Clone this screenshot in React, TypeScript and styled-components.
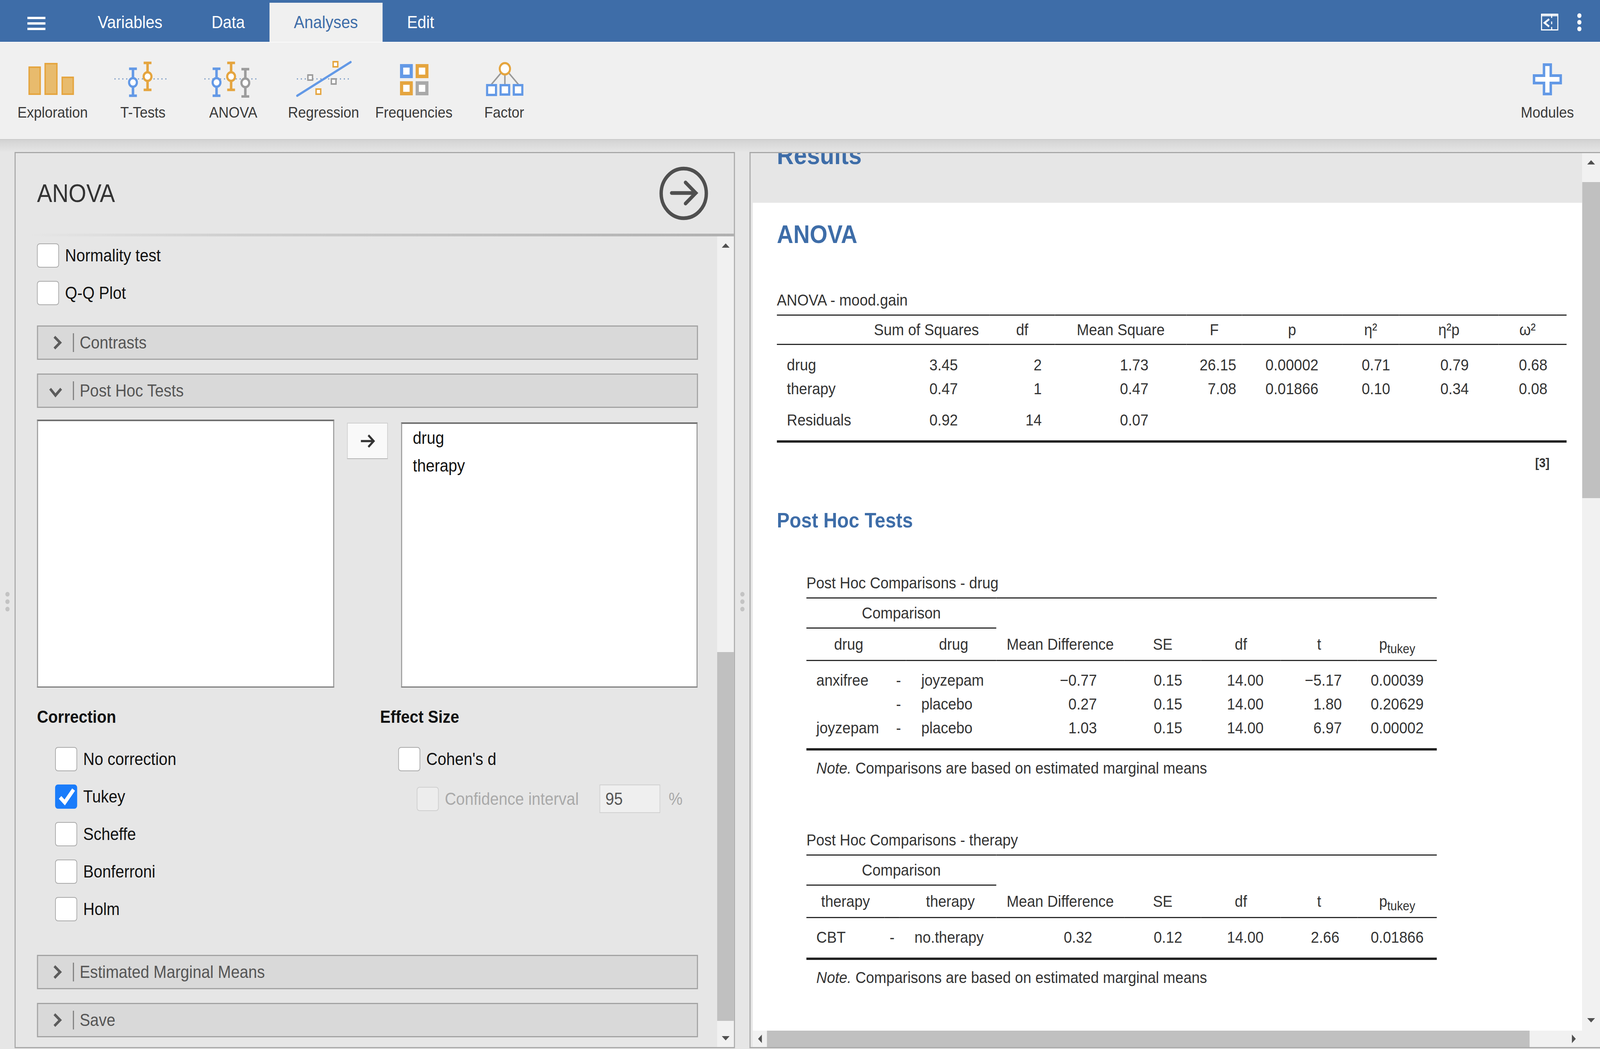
import React from 'react';
import styled, { createGlobalStyle } from 'styled-components';

const Global = createGlobalStyle`
  * { box-sizing: border-box; }
  html, body { margin: 0; padding: 0; width: 100%; height: 100%; overflow: hidden; }
  body { font-family: "Liberation Sans", Arial, sans-serif; color: #333; background: #e6e6e6; }
`;

const Viewport = styled.div`
  width: 100vw; height: 100vh; overflow: hidden;
`;
const Page = styled.div`
  width: 4500px; height: 2685px; display: flex; flex-direction: column; overflow: hidden;
  transform-origin: 0 0;
`;

/* ---------- top bar ---------- */
const TopBar = styled.header`
  height: 107px; flex: none; background: #3e6da8; display: flex; align-items: flex-end;
`;
const MenuZone = styled.div`
  width: 206px; height: 107px; display: flex; align-items: center; padding: 12px 0 0 77px;
`;
const Tabs = styled.nav`
  display: flex; height: 100px; flex: 1;
`;
const Tab = styled.div<{ $active?: boolean }>`
  padding: 0 69px; font-size: 44.4px; line-height: 100px;
  color: ${p => (p.$active ? '#3e6da8' : '#fff')};
  background: ${p => (p.$active ? '#f0f0f0' : 'transparent')};
`;
const TopRight = styled.div`
  display: flex; align-items: center; height: 107px; padding: 6px 52px 0 0; gap: 53px;
`;

/* ---------- ribbon ---------- */
const Ribbon = styled.div`
  height: 251px; flex: none; background: #f0f0f0; display: flex; justify-content: space-between;
  padding: 41px 21px 0; border-top: 2px solid #f9f9f9; border-bottom: 2px solid #c9c9c9;
`;
const RibbonGroup = styled.div`
  display: flex;
`;
const RibbonButton = styled.div`
  width: 254px; display: flex; flex-direction: column; align-items: center; gap: 14px;
`;
const RibbonLabel = styled.div`
  font-size: 39.5px; line-height: 46px; color: #3a3a3a; white-space: nowrap;
`;

/* ---------- main ---------- */
const Main = styled.main`
  flex: 1; display: flex; padding-top: 31px; min-height: 0;
  background: linear-gradient(#d3d3d3, #e6e6e6 32px);
`;
const Gutter = styled.div`
  width: 41px; flex: none; display: flex; flex-direction: column; align-items: center;
  justify-content: center; gap: 7px; padding-top: 6px;
`;
const GutterDot = styled.span`
  width: 12px; height: 12px; border-radius: 50%; background: #c3c3c3;
`;

/* ---------- options panel ---------- */
const OptionsPanel = styled.section`
  width: 2026px; flex: none; margin-bottom: 2px; display: flex; flex-direction: column;
  border: 3px solid #a8a8a8; background: #e6e6e6;
`;
const OptionsHeader = styled.div`
  height: 206px; flex: none; display: flex; align-items: center; justify-content: space-between;
  padding: 0 72px 0 60px;
`;
const OptionsTitle = styled.h1`
  margin: 0; font-size: 64px; font-weight: 400; color: #333;
`;
const HeaderRule = styled.div`
  height: 7px; flex: none;
  background: linear-gradient(to right, #e6e6e6 2%, #cfcfcf 30%, #b0b0b0 100%);
`;
const OptionsBody = styled.div`
  flex: 1; display: flex; min-height: 0;
`;
const OptionsContent = styled.div`
  flex: 1; padding: 18px 54px 0 60px; font-size: 44px; color: #111;
`;
const TopChecks = styled.div`
  display: flex; flex-direction: column; gap: 34px; margin-bottom: 52px;
`;
const CheckRow = styled.div`
  display: flex; align-items: center; gap: 17px; height: 62px; white-space: nowrap;
`;
const Box = styled.span<{ $checked?: boolean; $off?: boolean }>`
  width: 62px; height: 62px; flex: none; border-radius: 8px; display: flex;
  background: ${p => (p.$checked ? '#1a7cfa' : p.$off ? '#ededed' : '#fff')};
  border: 2px solid ${p => (p.$checked ? '#1a7cfa' : p.$off ? '#cfcfcf' : '#a9a9a9')};
`;
const Section = styled.div<{ $open?: boolean }>`
  height: 88px; display: flex; align-items: center; background: #d9d9d9;
  border: 3px solid #a3a3a3; margin-bottom: ${p => (p.$open ? 30 : 35)}px;
  color: #555; font-size: 44px;
`;
const SectionDivider = styled.span`
  width: 3px; height: 48px; background: #7b7b7b; margin-right: 16px;
`;
const Lists = styled.div`
  display: flex; align-items: flex-end; width: 1858px; height: 686px;
`;
const VarList = styled.div<{ $h: number; $w: number }>`
  width: ${p => p.$w}px; height: ${p => p.$h}px; flex: none; background: #fff;
  border: 3px solid #9a9a9a; border-top: 4px solid #707070; border-bottom-color: #7c7c7c;
  padding-left: 30px;
`;
const VarItem = styled.div`
  line-height: 71px; font-size: 44px; color: #111;
`;
const MoveButton = styled.div`
  width: 115px; height: 93px; flex: none; align-self: flex-start; margin: 8px 37px 0 36px;
  background: #f9f9f9; border: 2px solid #cfcfcf; border-bottom-color: #b5b5b5;
  display: flex; align-items: center; justify-content: center;
`;
const Groups = styled.div`
  display: flex; margin-top: 50px; margin-bottom: 86px;
`;
const GroupCol = styled.div<{ $w: number }>`
  width: ${p => p.$w}px; flex: none;
`;
const GroupHead = styled.div`
  font-size: 44px; font-weight: 700; line-height: 50px; color: #111; margin-bottom: 52px;
`;
const GroupList = styled.div`
  display: flex; flex-direction: column; gap: 34px; padding-left: 51px;
`;
const ConfidenceRow = styled.div`
  display: flex; align-items: center; height: 73px; padding-left: 52px; white-space: nowrap; color: #a9a9a9;
`;
const ConfidenceLabel = styled.span`
  margin: 0 58px 0 17px;
`;
const NumberBox = styled.span`
  width: 171px; height: 73px; flex: none; padding-left: 15px; line-height: 69px;
  background: #efefef; border: 2px solid #d0d0d0; color: #555;
`;
const Percent = styled.span`
  margin-left: 24px;
`;

/* ---------- scrollbars ---------- */
const VBar = styled.div<{ $bottom?: number }>`
  width: ${p => (p.$bottom ? 50 : 47)}px; flex: none; background: #f1f1f1; display: flex; flex-direction: column;
  align-items: center; padding-bottom: ${p => p.$bottom ?? 0}px;
`;
const BarArrow = styled.div<{ $h?: number }>`
  height: ${p => p.$h ?? 46}px; width: 100%; flex: none; display: flex; align-items: center; justify-content: center;
`;
const BarArrowEnd = styled(BarArrow)`
  margin-top: auto;
`;
const VThumb = styled.div<{ $gap: number; $size: number }>`
  width: 100%; flex: none; background: #c0c0c0; margin-top: ${p => p.$gap}px; height: ${p => p.$size}px;
`;
const HBar = styled.div`
  height: 42px; flex: none; background: #f1f1f1; display: flex; align-items: stretch; margin-left: 6px;
`;
const HCap = styled.div<{ $w: number }>`
  width: ${p => p.$w}px; flex: none; display: flex; align-items: center; justify-content: center;
`;
const HThumb = styled.div<{ $w: number }>`
  width: ${p => p.$w}px; flex: none; background: #c0c0c0;
`;
const HRest = styled.div`
  flex: 1; display: flex; align-items: center; justify-content: flex-end; padding-right: 68px;
`;

/* ---------- results panel ---------- */
const ResultsPanel = styled.section`
  flex: 1; min-width: 0; margin-bottom: 2px; display: flex; flex-direction: column;
  border-top: 3px solid #a8a8a8; border-bottom: 3px solid #a8a8a8; border-left: 3px solid #a8a8a8;
  background: #e6e6e6;
`;
const ResultsBody = styled.div`
  flex: 1; display: flex; min-height: 0;
`;
const Doc = styled.div`
  flex: 1; min-width: 0; margin-left: 6px; overflow: hidden; background: #fff; display: flex; flex-direction: column;
`;
const Band = styled.div`
  height: 127px; flex: none; background: #e6e6e6; overflow: hidden; padding-left: 68px;
`;
const ResultsTitle = styled.h1`
  margin: -33px 0 0; font-size: 66px; line-height: 76px; font-weight: 700; color: #3e6da8;
`;
const DocBody = styled.div`
  padding: 44px 0 0 68px; color: #333;
`;
const H2 = styled.h2`
  margin: 0 0 108px; font-size: 64px; line-height: 74px; font-weight: 700; color: #3e6da8;
`;
const H3 = styled.h3`
  margin: 97px 0 107px; font-size: 53.5px; line-height: 60px; font-weight: 700; color: #3e6da8;
`;
const TableTitle = styled.div`
  font-size: 41.2px; line-height: 46px; margin-bottom: 14px; white-space: nowrap;
`;
const Indented = styled.div`
  padding-left: 83px;
`;
const TableBlock = styled.div`
  margin-bottom: 116px;
`;
const Grid = styled.table<{ $w: number }>`
  width: ${p => p.$w}px; table-layout: fixed; border-collapse: separate; border-spacing: 0;
  font-size: 41.2px; color: #333; white-space: nowrap;
`;
const Col = styled.col<{ $w: number }>`
  width: ${p => p.$w}px;
`;
const Head = styled.th<{ $rules?: 'top' | 'bottom' | 'both'; $h: number; $shift?: number }>`
  height: ${p => p.$h}px; padding: 0 0 0 ${p => p.$shift ?? 0}px; font-weight: 400; text-align: center;
  border-top: ${p => (p.$rules === 'top' || p.$rules === 'both' ? '3px solid #2b2b2b' : '0')};
  border-bottom: ${p => (p.$rules === 'bottom' || p.$rules === 'both' ? '3px solid #2b2b2b' : '0')};
`;
const Cell = styled.td<{ $align?: 'left' | 'right' | 'center'; $pl?: number; $pr?: number }>`
  height: 61px; text-align: ${p => p.$align ?? 'right'};
  padding: 0 ${p => p.$pr ?? 0}px 0 ${p => p.$pl ?? 0}px;
`;
const Gap = styled.td<{ $h: number; $end?: boolean }>`
  height: ${p => p.$h}px; padding: 0; border-bottom: ${p => (p.$end ? '6px solid #222' : '0')};
`;
const NoteCell = styled.td`
  height: 90px; padding: 0 0 0 28px; text-align: left;
`;
const Footnote = styled.div`
  margin-top: 32px; width: 2173px; text-align: right; font-size: 33px; line-height: 40px; font-weight: 700;
`;
const Sub = styled.sub`
  font-size: 33px; line-height: 0;
`;

/* ---------- icons ---------- */
const BLUE = '#6399e6';
const ORANGE = '#e5a53f';
const GREY = '#9c9c9c';

const IconSvg = styled.svg`
  display: block; flex: none;
`;

const Dots = ({ x1, x2 }: { x1: number; x2: number }) => (
  <line x1={x1} x2={x2} y1={52} y2={52} stroke="#6f93c2" strokeWidth={3} strokeDasharray="3 8" />
);

const ErrorBar = ({ x, top, mid, bottom, c }: { x: number; top: number; mid: number; bottom: number; c: string }) => (
  <g>
    <line x1={x} x2={x} y1={top} y2={bottom} stroke={c} strokeWidth={7} />
    <line x1={x - 11} x2={x + 11} y1={top} y2={top} stroke={c} strokeWidth={6.5} />
    <line x1={x - 11} x2={x + 11} y1={bottom} y2={bottom} stroke={c} strokeWidth={6.5} />
    <circle cx={x} cy={mid} r={11} fill="#fff" stroke={c} strokeWidth={6} />
  </g>
);

const Square = ({ x, y, s, sw, c }: { x: number; y: number; s: number; sw: number; c: string }) => (
  <rect x={x + sw / 2} y={y + sw / 2} width={s - sw} height={s - sw} fill="#fff" stroke={c} strokeWidth={sw} />
);

const RibbonSvg = ({ children }: { children: React.ReactNode }) => (
  <IconSvg width={254} height={100} viewBox="0 0 254 100">{children}</IconSvg>
);

const ExplorationIcon = () => (
  <RibbonSvg>
    <g fill="#e8bb6d" stroke={ORANGE} strokeWidth={4}>
      <rect x={61} y={22} width={31} height={69} />
      <rect x={106} y={13} width={33} height={78} />
      <rect x={154} y={48} width={31} height={43} />
    </g>
  </RibbonSvg>
);
const TTestIcon = () => (
  <RibbonSvg>
    <Dots x1={47} x2={201} />
    <ErrorBar x={99} top={26} mid={61} bottom={95} c={BLUE} />
    <ErrorBar x={140} top={11} mid={46} bottom={80} c={ORANGE} />
  </RibbonSvg>
);
const AnovaIcon = () => (
  <RibbonSvg>
    <Dots x1={46} x2={200} />
    <ErrorBar x={80} top={26} mid={61} bottom={95} c={BLUE} />
    <ErrorBar x={121} top={11} mid={46} bottom={80} c={ORANGE} />
    <ErrorBar x={161} top={27} mid={62} bottom={97} c={GREY} />
  </RibbonSvg>
);
const RegressionIcon = () => (
  <RibbonSvg>
    <Dots x1={52} x2={206} />
    <line x1={53} y1={95} x2={203} y2={9} stroke={BLUE} strokeWidth={6} strokeLinecap="round" />
    <Square x={152} y={6} s={17} sw={4} c={ORANGE} />
    <Square x={81} y={40} s={17} sw={4} c={GREY} />
    <Square x={147} y={50} s={17} sw={4} c={GREY} />
    <Square x={104} y={76} s={17} sw={4} c={ORANGE} />
  </RibbonSvg>
);
const FrequenciesIcon = () => (
  <RibbonSvg>
    <Square x={88} y={14} s={36} sw={9} c={BLUE} />
    <Square x={132} y={14} s={36} sw={9} c={ORANGE} />
    <Square x={88} y={58} s={36} sw={9} c={ORANGE} />
    <Square x={132} y={58} s={36} sw={9} c="#a9a9a9" />
  </RibbonSvg>
);
const FactorIcon = () => (
  <RibbonSvg>
    <g stroke="#999" strokeWidth={4}>
      <line x1={117} y1={38} x2={91} y2={66} />
      <line x1={129} y1={40} x2={129} y2={66} />
      <line x1={141} y1={38} x2={167} y2={66} />
    </g>
    <circle cx={129} cy={26} r={14.5} fill="#fff" stroke={ORANGE} strokeWidth={5.5} />
    <Square x={76} y={65} s={31} sw={6} c={BLUE} />
    <Square x={114} y={65} s={30} sw={6} c={BLUE} />
    <Square x={151} y={65} s={30} sw={6} c={BLUE} />
  </RibbonSvg>
);
const ModulesIcon = () => (
  <RibbonSvg>
    <path
      d="M117.5 15.5H136.5V43.5H164.5V62.5H136.5V90.5H117.5V62.5H89.5V43.5H117.5Z"
      fill="#fff" stroke={BLUE} strokeWidth={7}
    />
  </RibbonSvg>
);

const MenuIcon = () => (
  <IconSvg width={51} height={36} viewBox="0 0 51 36">
    <g fill="#fff">
      <rect x={0} y={1} width={51} height={6} />
      <rect x={0} y={15} width={51} height={6} />
      <rect x={0} y={29} width={51} height={6} />
    </g>
  </IconSvg>
);
const SplitIcon = () => (
  <IconSvg width={49} height={43} viewBox="0 0 49 43">
    <rect x={1.5} y={1.5} width={46} height={40} fill="none" stroke="#fff" strokeWidth={3} />
    <line x1={1} y1={5} x2={48} y2={5} stroke="#fff" strokeWidth={3} />
    <path d="M30 2V11M30 20V27M30 34V42" stroke="#fff" strokeWidth={3} fill="none" />
    <path d="M23 14L10 23.5L23 33" stroke="#fff" strokeWidth={5} fill="none" />
  </IconSvg>
);
const KebabIcon = () => (
  <IconSvg width={12} height={46} viewBox="0 0 12 46">
    <g fill="#fff">
      <circle cx={6} cy={6} r={6} />
      <circle cx={6} cy={23} r={6} />
      <circle cx={6} cy={40} r={6} />
    </g>
  </IconSvg>
);
const CloseCircle = () => (
  <IconSvg width={138} height={138} viewBox="0 0 138 138">
    <circle cx={69} cy={69} r={63.5} fill="none" stroke="#4f4f4f" strokeWidth={9.5} />
    <path d="M35 68H103M74 41L103 68L74 95" fill="none" stroke="#4f4f4f" strokeWidth={9.5} strokeLinecap="round" strokeLinejoin="miter" />
  </IconSvg>
);
const Chevron = ({ open }: { open?: boolean }) => (
  <IconSvg width={98} height={48} viewBox="0 0 98 48">
    <path d={open ? 'M34 19L49 36L65 19' : 'M46 9L62 24L46 39'} fill="none" stroke="#5c5c5c" strokeWidth={7} />
  </IconSvg>
);
const MoveArrow = () => (
  <IconSvg width={42} height={36} viewBox="0 0 42 36">
    <path d="M2 18H37M23 3L38 18L23 33" fill="none" stroke="#333" strokeWidth={5.5} />
  </IconSvg>
);
const Tick = () => (
  <IconSvg width={58} height={58} viewBox="0 0 58 58">
    <path d="M12 31L25 44L50 11" fill="none" stroke="#fff" strokeWidth={10} />
  </IconSvg>
);
const Tri = ({ d }: { d: 'up' | 'down' | 'left' | 'right' }) => {
  const paths = {
    up: 'M0 11L11 0L22 11Z',
    down: 'M0 0L22 0L11 11Z',
    left: 'M11 0V22L0 11Z',
    right: 'M0 0V22L11 11Z',
  };
  const wide = d === 'up' || d === 'down';
  return (
    <IconSvg width={wide ? 22 : 11} height={wide ? 11 : 22} viewBox={wide ? '0 0 22 11' : '0 0 11 22'}>
      <path d={paths[d]} fill="#505050" />
    </IconSvg>
  );
};

/* ---------- data ---------- */
const ribbonItems = [
  { label: 'Exploration', Icon: ExplorationIcon },
  { label: 'T-Tests', Icon: TTestIcon },
  { label: 'ANOVA', Icon: AnovaIcon },
  { label: 'Regression', Icon: RegressionIcon },
  { label: 'Frequencies', Icon: FrequenciesIcon },
  { label: 'Factor', Icon: FactorIcon },
];

const anovaCols = [243, 355, 184, 370, 156, 282, 160, 280, 162, 29];
const anovaPads = [89, 37, 107, 16, 67, 25, 84, 25];
const anovaHead = ['Sum of Squares', 'df', 'Mean Square', 'F', 'p', 'η²', 'η²p', 'ω²'];
const anovaRows = [
  ['drug', '3.45', '2', '1.73', '26.15', '0.00002', '0.71', '0.79', '0.68'],
  ['therapy', '0.47', '1', '0.47', '7.08', '0.01866', '0.10', '0.34', '0.08'],
];
const anovaResidual = ['Residuals', '0.92', '14', '0.07', '', '', '', '', ''];

const AnovaRow = ({ row }: { row: string[] }) => (
  <tr>
    {row.map((v, i) =>
      i === 0 ? (
        <Cell key={i} $align="left" $pl={28}>{v}</Cell>
      ) : (
        <Cell key={i} $pr={anovaPads[i - 1]}>{v}</Cell>
      ),
    )}
    <Cell />
  </tr>
);

const AnovaTable = () => (
  <Grid $w={2221}>
    <colgroup>{anovaCols.map((w, i) => <Col key={i} $w={w} />)}</colgroup>
    <thead>
      <tr>
        <Head $h={78} $rules="both" />
        {anovaHead.map(h => <Head key={h} $h={78} $rules="both">{h}</Head>)}
        <Head $h={78} $rules="both" />
      </tr>
    </thead>
    <tbody>
      <tr><Gap $h={21} colSpan={10} /></tr>
      {anovaRows.map(r => <AnovaRow key={r[0]} row={r} />)}
      <tr><Gap $h={19} colSpan={10} /></tr>
      <AnovaRow row={anovaResidual} />
      <tr><Gap $h={27} $end colSpan={10} /></tr>
    </tbody>
  </Grid>
);

type PostHocProps = {
  title: string;
  factor: string;
  cols: number[];
  col3Pl: number;
  pads: number[];
  rows: string[][];
};

const PostHocTable = ({ title, factor, cols, col3Pl, pads, rows }: PostHocProps) => (
  <TableBlock>
    <TableTitle>{title}</TableTitle>
    <Grid $w={1773}>
      <colgroup>{cols.map((w, i) => <Col key={i} $w={w} />)}</colgroup>
      <thead>
        <tr>
          <Head $h={80} $rules="both" colSpan={3}>Comparison</Head>
          <Head $h={80} $rules="top" colSpan={5} />
        </tr>
        <tr>
          <Head $h={83} $rules="bottom">{factor}</Head>
          <Head $h={83} $rules="bottom" />
          <Head $h={83} $rules="bottom" $shift={14}>{factor}</Head>
          <Head $h={83} $rules="bottom">Mean Difference</Head>
          <Head $h={83} $rules="bottom">SE</Head>
          <Head $h={83} $rules="bottom">df</Head>
          <Head $h={83} $rules="bottom">t</Head>
          <Head $h={83} $rules="bottom">p<Sub>tukey</Sub></Head>
        </tr>
      </thead>
      <tbody>
        <tr><Gap $h={19} colSpan={8} /></tr>
        {rows.map((r, idx) => (
          <tr key={idx}>
            <Cell $align="left" $pl={28}>{r[0]}</Cell>
            <Cell $align="center">-</Cell>
            <Cell $align="left" $pl={col3Pl}>{r[1]}</Cell>
            {r.slice(2).map((v, i) => <Cell key={i} $pr={pads[i]}>{v}</Cell>)}
          </tr>
        ))}
        <tr><Gap $h={27} $end colSpan={8} /></tr>
        <tr>
          <NoteCell colSpan={8}><em>Note.</em> Comparisons are based on estimated marginal means</NoteCell>
        </tr>
      </tbody>
    </Grid>
  </TableBlock>
);

const SectionBar = ({ label, open }: { label: string; open?: boolean }) => (
  <Section $open={open}>
    <Chevron open={open} />
    <SectionDivider />
    {label}
  </Section>
);

const Check = ({ label, checked }: { label: string; checked?: boolean }) => (
  <CheckRow>
    <Box $checked={checked}>{checked && <Tick />}</Box>
    {label}
  </CheckRow>
);

export default function App() {
  // The browser can open narrower than the 4500px design: fit the page to the real window width.
  const fit = window.innerWidth / 4500;
  return (
    <Viewport>
      <Global />
      <Page style={{ transform: `scaleX(${fit})` }}>
        <TopBar>
          <MenuZone><MenuIcon /></MenuZone>
          <Tabs>
            <Tab>Variables</Tab>
            <Tab>Data</Tab>
            <Tab $active>Analyses</Tab>
            <Tab>Edit</Tab>
          </Tabs>
          <TopRight>
            <SplitIcon />
            <KebabIcon />
          </TopRight>
        </TopBar>

        <Ribbon>
          <RibbonGroup>
            {ribbonItems.map(({ label, Icon }) => (
              <RibbonButton key={label}>
                <Icon />
                <RibbonLabel>{label}</RibbonLabel>
              </RibbonButton>
            ))}
          </RibbonGroup>
          <RibbonButton>
            <ModulesIcon />
            <RibbonLabel>Modules</RibbonLabel>
          </RibbonButton>
        </Ribbon>

        <Main>
          <Gutter><GutterDot /><GutterDot /><GutterDot /></Gutter>

          <OptionsPanel>
            <OptionsHeader>
              <OptionsTitle>ANOVA</OptionsTitle>
              <CloseCircle />
            </OptionsHeader>
            <HeaderRule />
            <OptionsBody>
              <OptionsContent>
                <TopChecks>
                  <Check label="Normality test" />
                  <Check label="Q-Q Plot" />
                </TopChecks>
                <SectionBar label="Contrasts" />
                <SectionBar label="Post Hoc Tests" open />
                <Lists>
                  <VarList $w={836} $h={686} />
                  <MoveButton><MoveArrow /></MoveButton>
                  <VarList $w={834} $h={679}>
                    <VarItem>drug</VarItem>
                    <VarItem>therapy</VarItem>
                  </VarList>
                </Lists>
                <Groups>
                  <GroupCol $w={965}>
                    <GroupHead>Correction</GroupHead>
                    <GroupList>
                      <Check label="No correction" />
                      <Check label="Tukey" checked />
                      <Check label="Scheffe" />
                      <Check label="Bonferroni" />
                      <Check label="Holm" />
                    </GroupList>
                  </GroupCol>
                  <GroupCol $w={893}>
                    <GroupHead>Effect Size</GroupHead>
                    <GroupList>
                      <Check label="Cohen's d" />
                      <ConfidenceRow>
                        <Box $off />
                        <ConfidenceLabel>Confidence interval</ConfidenceLabel>
                        <NumberBox>95</NumberBox>
                        <Percent>%</Percent>
                      </ConfidenceRow>
                    </GroupList>
                  </GroupCol>
                </Groups>
                <SectionBar label="Estimated Marginal Means" />
                <SectionBar label="Save" />
              </OptionsContent>
              <VBar>
                <BarArrow><Tri d="up" /></BarArrow>
                <VThumb $gap={1018} $size={944} />
                <BarArrowEnd><Tri d="down" /></BarArrowEnd>
              </VBar>
            </OptionsBody>
          </OptionsPanel>

          <Gutter><GutterDot /><GutterDot /><GutterDot /></Gutter>

          <ResultsPanel>
            <ResultsBody>
              <Doc>
                <Band><ResultsTitle>Results</ResultsTitle></Band>
                <DocBody>
                  <H2>ANOVA</H2>
                  <TableTitle>ANOVA - mood.gain</TableTitle>
                  <AnovaTable />
                  <Footnote>[3]</Footnote>
                  <H3>Post Hoc Tests</H3>
                  <Indented>
                    <PostHocTable
                      title="Post Hoc Comparisons - drug"
                      factor="drug"
                      cols={[238, 42, 254, 360, 216, 224, 216, 223]}
                      col3Pl={43}
                      pads={[77, 53, 48, 44, 37]}
                      rows={[
                        ['anxifree', 'joyzepam', '−0.77', '0.15', '14.00', '−5.17', '0.00039'],
                        ['', 'placebo', '0.27', '0.15', '14.00', '1.80', '0.20629'],
                        ['joyzepam', 'placebo', '1.03', '0.15', '14.00', '6.97', '0.00002'],
                      ]}
                    />
                    <PostHocTable
                      title="Post Hoc Comparisons - therapy"
                      factor="therapy"
                      cols={[220, 42, 272, 360, 216, 224, 216, 223]}
                      col3Pl={42}
                      pads={[90, 53, 48, 51, 37]}
                      rows={[['CBT', 'no.therapy', '0.32', '0.12', '14.00', '2.66', '0.01866']]}
                    />
                  </Indented>
                </DocBody>
              </Doc>
              <VBar $bottom={4}>
                <BarArrow $h={47}><Tri d="up" /></BarArrow>
                <VThumb $gap={27} $size={809} />
                <BarArrowEnd><Tri d="down" /></BarArrowEnd>
              </VBar>
            </ResultsBody>
            <HBar>
              <HCap $w={40}><Tri d="left" /></HCap>
              <HThumb $w={2145} />
              <HRest><Tri d="right" /></HRest>
            </HBar>
          </ResultsPanel>
        </Main>
      </Page>
    </Viewport>
  );
}
